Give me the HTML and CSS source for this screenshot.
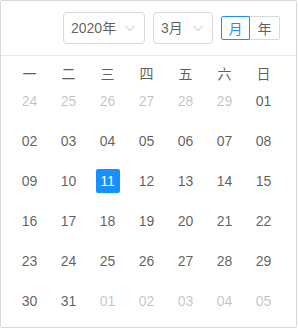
FILE: index.html
```html
<!DOCTYPE html>
<html lang="zh-CN">
<head>
<meta charset="utf-8">
<link rel="stylesheet" href="styles.css">
</head>
<body>
<div class="calendar">
  <div class="header">
    <div class="select year">
      <span class="sel-text">2020年</span>
      <svg class="arrow" viewBox="0 0 12 12" width="12" height="12"><polyline points="1.5,4 6,8.5 10.5,4" fill="none" stroke="currentColor" stroke-width="1"/></svg>
    </div>
    <div class="select month">
      <span class="sel-text">3月</span>
      <svg class="arrow" viewBox="0 0 12 12" width="12" height="12"><polyline points="1.5,4 6,8.5 10.5,4" fill="none" stroke="currentColor" stroke-width="1"/></svg>
    </div>
    <div class="radio-group">
      <span class="radio active">月</span>
      <span class="radio">年</span>
    </div>
  </div>
  <div class="body">
    <div class="week">
      <span>一</span><span>二</span><span>三</span><span>四</span><span>五</span><span>六</span><span>日</span>
    </div>
    <div class="dates">
      <span class="out">24</span><span class="out">25</span><span class="out">26</span><span class="out">27</span><span class="out">28</span><span class="out">29</span><span>01</span>
      <span>02</span><span>03</span><span>04</span><span>05</span><span>06</span><span>07</span><span>08</span>
      <span>09</span><span>10</span><span class="selected">11</span><span>12</span><span>13</span><span>14</span><span>15</span>
      <span>16</span><span>17</span><span>18</span><span>19</span><span>20</span><span>21</span><span>22</span>
      <span>23</span><span>24</span><span>25</span><span>26</span><span>27</span><span>28</span><span>29</span>
      <span>30</span><span>31</span><span class="out">01</span><span class="out">02</span><span class="out">03</span><span class="out">04</span><span class="out">05</span>
    </div>
  </div>
</div>
</body>
</html>
```

FILE: styles.css
```css
* { box-sizing: border-box; }
html, body { margin: 0; padding: 0; background: #fff; }
body {
  font-family: "Liberation Sans", Arial, "Noto Sans CJK SC", sans-serif;
  font-size: 14px;
  color: rgba(0, 0, 0, 0.65);
}
.calendar {
  width: 297px;
  border: 1px solid #d9d9d9;
  border-radius: 2px;
  background: #fff;
}
.header {
  display: flex;
  justify-content: flex-end;
  align-items: center;
  gap: 8px;
  padding: 11px 16px;
  border-bottom: 1px solid #e8e8e8;
}
.select {
  height: 32px;
  border: 1px solid #d9d9d9;
  border-radius: 4px;
  display: flex;
  align-items: center;
  justify-content: space-between;
  padding: 0 8px 0 7px;
}
.select.year { width: 82px; }
.select.month { width: 60px; }
.sel-text { line-height: 30px; }
.arrow { color: rgba(0, 0, 0, 0.25); display: block; }
.radio-group {
  display: flex;
  height: 24px;
}
.radio {
  width: 29px;
  height: 24px;
  line-height: 22px;
  text-align: center;
  border: 1px solid #d9d9d9;
  font-family: "Noto Sans CJK SC", sans-serif;
  font-size: 14px;
  color: rgba(0, 0, 0, 0.65);
}
.radio:first-child { border-radius: 2px 0 0 2px; }
.radio:last-child { border-radius: 0 2px 2px 0; border-left: none; width: 30px; }
.radio.active { border-color: #1890ff; color: #1890ff; }
.body {
  padding: 5px 12px 14px 9px;
}
.week, .dates {
  display: grid;
  grid-template-columns: repeat(7, 39px);
}
.week {
  margin-bottom: 4px;
}
.week span {
  height: 24px;
  line-height: 24px;
  text-align: center;
  font-family: "Noto Sans CJK SC", sans-serif;
}
.dates {
  row-gap: 16px;
}
.dates span {
  justify-self: center;
  width: 24px;
  height: 24px;
  line-height: 24px;
  text-align: center;
  border-radius: 2px;
}
.dates span.out { color: rgba(0, 0, 0, 0.25); }
.dates span.selected { background: #1890ff; color: #fff; }
```
